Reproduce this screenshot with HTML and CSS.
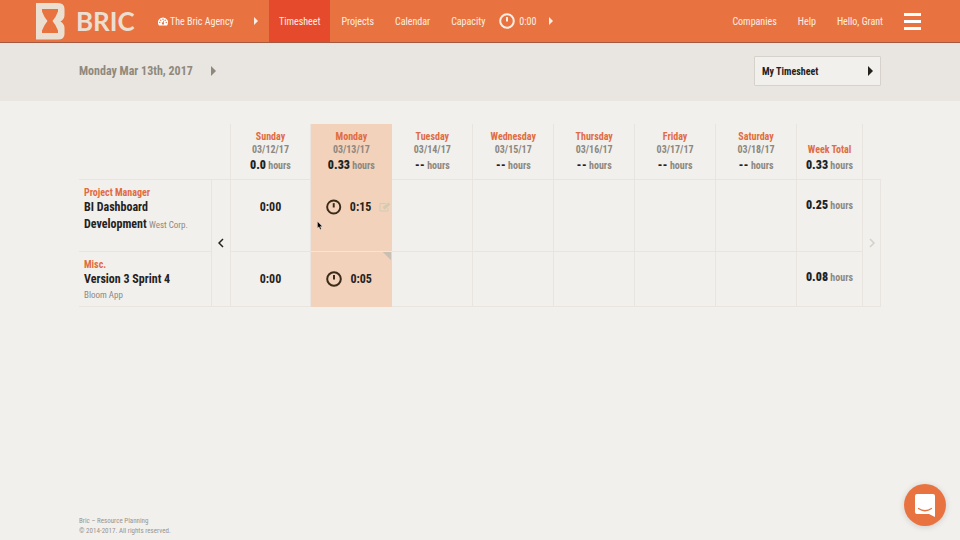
FILE: index.html
```html
<!DOCTYPE html>
<html lang="en">
<head>
  <meta charset="UTF-8" />
  <meta name="viewport" content="width=device-width, initial-scale=1.0"/>
  <title>Timesheet - Bric</title>
  <link rel="stylesheet" href="styles.css">
</head>
<body>
  <header class="topbar">
    <a class="logo" href="#">
      <svg width="29" height="37" viewBox="0 0 29 37" aria-hidden="true">
        <path fill="#ebdfd2" fill-rule="evenodd" d="M0 0H22Q28.500 0 28.500 6V12Q28.500 16 24.500 18.500Q28.500 21 28.500 25V31Q28.500 36.500 22 36.500H0ZM6 6V8.500Q8 14 11.500 18Q8 22 6 27.500V30H22V27.500Q20 22 16.500 18Q20 14 22 8.500V6Z"/>
      </svg>
      <span>BRIC</span>
    </a>
    <button class="agency" type="button">
      <svg width="10" height="9" viewBox="0 0 20 18" aria-hidden="true">
        <path fill="#fff" d="M10 1A10 10 0 0 0 1.500 16.500Q1.800 17 2.500 17H17.500Q18.200 17 18.500 16.500A10 10 0 0 0 10 1Z"/>
        <g fill="#e97340"><circle cx="3.500" cy="11" r="1.400"/><circle cx="5.500" cy="6.500" r="1.400"/><circle cx="10" cy="4.500" r="1.400"/><circle cx="14.500" cy="6.500" r="1.400"/><circle cx="16.500" cy="11" r="1.400"/><circle cx="10" cy="13" r="2.300"/></g>
        <path stroke="#e97340" stroke-width="1.500" d="M10 13L11.500 7"/>
      </svg>
      The Bric Agency
      <span class="caret"></span>
    </button>
    <nav class="menu">
      <a class="active" href="#">Timesheet</a>
      <a href="#">Projects</a>
      <a href="#">Calendar</a>
      <a href="#">Capacity</a>
    </nav>
    <button class="timer" type="button">
      <svg class="clock" width="16" height="16" viewBox="0 0 16 16" aria-hidden="true"><circle cx="8" cy="8" r="6.800"/><path d="M8 4V8.500"/></svg>
      0:00
      <span class="caret"></span>
    </button>
    <nav class="account">
      <a href="#">Companies</a>
      <a href="#">Help</a>
      <a href="#">Hello, Grant</a>
      <button class="burger" type="button" aria-label="Menu"><span></span><span></span><span></span></button>
    </nav>
  </header>

  <div class="datebar">
    <h1>Monday Mar 13th, 2017</h1>
    <button class="next-date" type="button" aria-label="Pick date"><span class="caret"></span></button>
    <div class="picker">
      <select aria-label="Timesheet"><option>My Timesheet</option></select>
      <span class="caret"></span>
    </div>
  </div>

  <main>
    <table class="sheet">
      <colgroup>
        <col class="col-project"><col class="col-prev">
        <col><col><col><col><col><col><col>
        <col class="col-total"><col class="col-next">
      </colgroup>
      <thead>
        <tr>
          <td colspan="2"></td>
          <th>Sunday<small>03/12/17</small><p><b>0.0</b> hours</p></th>
          <th class="today">Monday<small>03/13/17</small><p><b>0.33</b> hours</p></th>
          <th>Tuesday<small>03/14/17</small><p><b>--</b> hours</p></th>
          <th>Wednesday<small>03/15/17</small><p><b>--</b> hours</p></th>
          <th>Thursday<small>03/16/17</small><p><b>--</b> hours</p></th>
          <th>Friday<small>03/17/17</small><p><b>--</b> hours</p></th>
          <th>Saturday<small>03/18/17</small><p><b>--</b> hours</p></th>
          <th>Week Total<p><b>0.33</b> hours</p></th>
          <td class="edge"></td>
        </tr>
      </thead>
      <tbody>
        <tr class="tall">
          <th class="project"><em>Project Manager</em><strong>BI Dashboard Development</strong> <small>West Corp.</small></th>
          <td class="arrow" rowspan="2">
            <button type="button" aria-label="Previous week"><svg width="6" height="10" viewBox="0 0 6 10"><path d="M5 1L1 5L5 9"/></svg></button>
          </td>
          <td class="time">0:00</td>
          <td class="time today">
            <div class="entry">
              <svg class="clock" width="16" height="16" viewBox="0 0 16 16" aria-hidden="true"><circle cx="8" cy="8" r="6.800"/><path d="M8 4V8.500"/></svg>
              <span>0:15</span>
              <button class="edit" type="button" aria-label="Edit"><svg width="12" height="10" viewBox="0 0 12 10"><path d="M7 1.500H1V9H9V6"/><path class="pen" d="M4.500 6.500L10.500 1.500"/></svg></button>
            </div>
            <svg class="cursor" width="6" height="9" viewBox="0 0 6 9" aria-hidden="true"><path d="M.5 .5V7L2 5.800L3.200 8.500L4.300 8L3.200 5.400H5.300Z"/></svg>
          </td>
          <td></td><td></td><td></td><td></td><td></td>
          <td class="total"><b>0.25</b> hours</td>
          <td class="arrow off" rowspan="2">
            <button type="button" aria-label="Next week" disabled><svg width="6" height="10" viewBox="0 0 6 10"><path d="M1 1L5 5L1 9"/></svg></button>
          </td>
        </tr>
        <tr>
          <th class="project"><em>Misc.</em><strong>Version 3 Sprint 4</strong><br><small>Bloom App</small></th>
          <td class="time">0:00</td>
          <td class="time today note">
            <div class="entry">
              <svg class="clock" width="16" height="16" viewBox="0 0 16 16" aria-hidden="true"><circle cx="8" cy="8" r="6.800"/><path d="M8 4V8.500"/></svg>
              <span>0:05</span>
            </div>
          </td>
          <td></td><td></td><td></td><td></td><td></td>
          <td class="total"><b>0.08</b> hours</td>
        </tr>
      </tbody>
    </table>
  </main>

  <footer>
    Bric – Resource Planning<br>
    © 2014-2017. All rights reserved.
  </footer>

  <button class="chat" type="button" aria-label="Chat">
    <svg width="20" height="23" viewBox="0 0 20 23"><path fill="#fff" d="M2 0H18Q20 0 20 2V23L14 20H2Q0 20 0 18V2Q0 0 2 0Z"/><path fill="none" stroke="#e97340" stroke-width="1.300" stroke-linecap="round" d="M3.500 14.500Q10 19 16.500 14.500"/></svg>
  </button>
</body>
</html>
```
FILE: styles.css
```css
* { box-sizing: border-box; }
body {
  margin: 0; min-height: 100vh;
  display: flex; flex-direction: column;
  background: #f2f0ed; color: #25221c;
  font-family: "Roboto Condensed", "Liberation Sans Narrow", Roboto, sans-serif;
  font-size: 10px; line-height: 13px;
}
a { color: inherit; text-decoration: none; }
button { background: none; border: 0; padding: 0; color: inherit; font: inherit; cursor: pointer; }
svg { display: block; }
.caret {
  border: solid transparent; border-width: 4px 0 4px 4px;
  border-left-color: currentColor;
}

/* top bar */
.topbar {
  display: flex; align-items: stretch; height: 43px;
  padding: 0 39px 0 36px;
  background: #e97340; border-bottom: 1px solid #a45a40;
  color: #fbeee4;
}
.logo {
  display: flex; align-items: center; gap: 11px; width: 122px;
  color: #ebdfd2; font: bold 26px/30px Lato, sans-serif;
}
.agency { display: flex; align-items: center; gap: 2px; width: 100px; }
.agency .caret { margin-left: auto; }
.menu { display: flex; gap: 1px; margin-left: 11px; }
.menu a { display: flex; align-items: center; padding: 0 10px; }
.menu .active { background: #e64a2c; }
.timer { display: flex; align-items: center; gap: 4px; margin-left: 4px; }
.timer .caret { margin-left: 8px; }
.clock { fill: none; stroke: currentColor; stroke-width: 2; }
.account { display: flex; align-items: center; gap: 21px; margin-left: auto; }
.burger { display: grid; gap: 4px; width: 17px; }
.burger span { height: 3px; background: #fff; }

/* date bar */
.datebar {
  display: flex; align-items: center; height: 58px;
  padding: 0 79px 2px; background: #e9e5e0; color: #8f897d;
}
h1 { margin: 0; font-size: 12px; line-height: 16px; }
.next-date { display: flex; margin-left: 18px; }
.next-date .caret, .picker .caret { border-width: 5px 0 5px 5px; }
.picker { position: relative; width: 127px; margin-left: auto; color: #25221c; }
.picker select {
  display: block; width: 100%; height: 30px; padding: 0 7px; appearance: none;
  border: 1px solid #d6d1ca; border-radius: 1px; background: #f2f0ed;
  color: inherit; font: bold 10px/13px "Roboto Condensed", "Liberation Sans Narrow", Roboto, sans-serif;
}
.picker .caret { position: absolute; right: 8px; top: 10px; pointer-events: none; }

/* timesheet */
main { flex: 1; padding: 23px 79px; }
.sheet { width: 100%; table-layout: fixed; border-collapse: collapse; }
.col-project { width: 132px; }
.col-prev { width: 19px; }
.col-total { width: 66px; }
.col-next { width: 18px; }
.sheet th, .sheet td { padding: 0; border: 1px solid #e8e5e0; vertical-align: top; }
.sheet thead th, .sheet thead td { height: 55px; border-top: 0; }
.sheet thead td:first-child { border-left: 0; }
.sheet thead .edge { border-right: 0; }
.sheet thead th { padding-bottom: 6px; vertical-align: bottom; color: #df6c42; }
.sheet thead small { display: block; color: #8c8880; font-size: 10px; }
.sheet p { margin: 2px 0 0; color: #8c8880; line-height: 14px; }
.sheet b { color: #25221c; font-size: 12px; }
.sheet tbody td { height: 55px; }
.sheet .tall td, .sheet .tall th { height: 72px; }
.sheet .today { background: #f3d2bb; border-color: #f3d2bb; }
.sheet .tall .today { border-bottom-color: #f2e5dc; }
.sheet .project { padding: 6px 5px 4px; border-left: 0; text-align: left; font-weight: normal; }
.project em { display: block; color: #df6c42; font-style: normal; font-weight: bold; }
.project strong { font-size: 12px; line-height: 17px; }
.project small { color: #8c8880; font-size: 9px; }
.sheet .time { position: relative; padding-top: 18px; text-align: center; font-size: 12px; line-height: 18px; font-weight: bold; }
.sheet .total { padding-top: 17px; text-align: center; color: #8c8880; font-weight: bold; line-height: 16px; }
.entry { display: flex; align-items: center; gap: 8px; padding-left: 15px; }
.entry .clock { color: #3a2a18; }
.edit { color: #d3cbb2; }
.edit svg { fill: none; stroke: currentColor; stroke-width: 1; }
.edit .pen { stroke-width: 3; }
.cursor { position: absolute; left: 6px; top: 41px; stroke: #fff; stroke-width: .3; }
.note::after {
  content: ""; position: absolute; right: 0; top: 0;
  width: 9px; height: 9px;
  background: #c9bfb2; clip-path: polygon(0 0, 100% 0, 100% 100%);
}
.sheet .arrow { vertical-align: middle; }
.arrow button { display: block; margin: 0 auto; }
.arrow svg { fill: none; stroke: #25221c; stroke-width: 1.5; }
.arrow.off svg { stroke: #d3cfc9; }

footer { padding: 0 79px 4px; color: #98948d; font-size: 7px; line-height: 10px; }

.chat {
  position: fixed; right: 14px; bottom: 14px;
  display: grid; place-items: center; width: 42px; height: 42px;
  border-radius: 50%; background: #e97340;
  box-shadow: 0 1px 6px rgba(0,0,0,0.15);
}
```
